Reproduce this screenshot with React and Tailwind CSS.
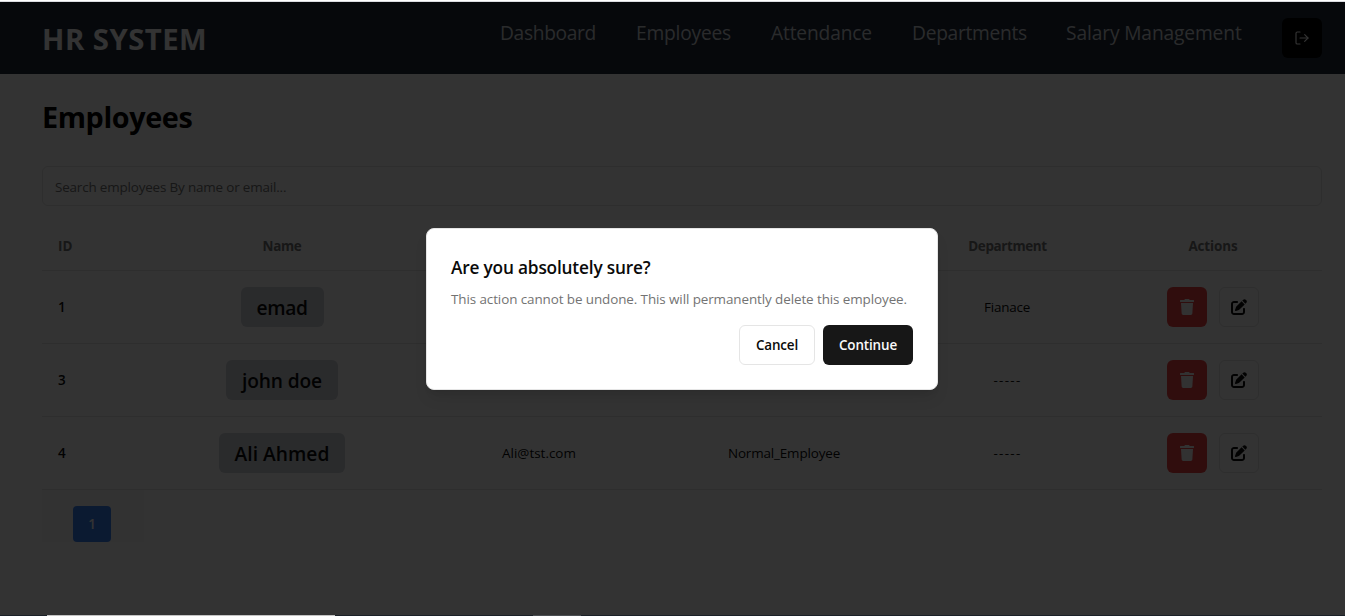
import { FaTrash } from "react-icons/fa";
import { FaPenToSquare } from "react-icons/fa6";
import { LogOut } from "lucide-react";

const navItems = [
  { label: "Dashboard", width: "w-24", track: "tracking-[-0.34px]" },
  { label: "Employees", width: "w-[95px]", track: "tracking-[-0.2px]" },
  { label: "Attendance", width: "w-[101px]", track: "tracking-[-0.15px]" },
  { label: "Departments", width: "w-[114px]", track: "tracking-[-0.28px]" },
  { label: "Salary Management", width: "w-44", track: "tracking-[-0.13px]" },
];

const employees = [
  { id: 1, name: "emad", track: "tracking-[-0.36px]", email: "", role: "", department: "Fianace" },
  { id: 3, name: "john doe", track: "tracking-[-0.14px]", email: "", role: "", department: "-----" },
  { id: 4, name: "Ali Ahmed", track: "tracking-[0.03px]", email: "Ali@tst.com", role: "Normal_Employee", department: "-----" },
];

function Header() {
  return (
    <header className="flex h-[72px] shrink-0 justify-between bg-[#1f2937] pt-4 pr-[23px] pb-4 pl-[42px]">
      <div className="text-[29.3px] leading-[42px] font-bold tracking-[0.47px] text-white">HR SYSTEM</div>
      <div className="flex items-start gap-10">
        <nav className="flex gap-10">
          {navItems.map((item) => (
            <a key={item.label} className={`whitespace-nowrap text-[19.2px] leading-[29px] text-gray-300 ${item.width} ${item.track}`}>
              {item.label}
            </a>
          ))}
        </nav>
        <button className="flex size-10 items-center justify-center rounded-md bg-black text-white">
          <LogOut className="size-4" strokeWidth={1.75} />
        </button>
      </div>
    </header>
  );
}

function EmployeeTable() {
  return (
    <table className="w-full table-fixed border-collapse text-[13.44px]">
      <colgroup>
        <col className="w-[102px]" />
        <col className="w-[276px]" />
        <col className="w-[238px]" />
        <col className="w-[252px]" />
        <col className="w-[194px]" />
        <col className="w-[218px]" />
      </colgroup>
      <thead>
        <tr className="h-[49px] border-b border-neutral-200 font-semibold text-neutral-500">
          <th className="px-4 pt-0.5 text-left">ID</th>
          <th className="pt-0.5 tracking-[-0.35px]">Name</th>
          <th></th>
          <th></th>
          <th className="pt-0.5 pl-px tracking-[-0.38px]">Department</th>
          <th className="pt-0.5 tracking-[-0.1px]">Actions</th>
        </tr>
      </thead>
      <tbody>
        {employees.map((e) => (
          <tr key={e.id} className="h-[73px] border-b border-neutral-200 text-center text-neutral-950">
            <td className="px-4 pt-0.5 text-left font-semibold">{e.id}</td>
            <td>
              <span className={`inline-flex h-10 items-center rounded-md bg-gray-300 px-4 pt-[3px] align-middle text-[19.2px] font-semibold ${e.track}`}>
                {e.name}
              </span>
            </td>
            <td className="pt-0.5">{e.email}</td>
            <td className="pt-0.5 tracking-[-0.15px]">{e.role}</td>
            <td className={e.department === "-----" ? "pt-0.5 pl-px tracking-[1.27px]" : "pt-0.5 tracking-[-0.2px]"}>{e.department}</td>
            <td>
              <div className="flex justify-center gap-3">
                <button className="flex size-10 items-center justify-center rounded-md bg-[#ef4444] text-neutral-50">
                  <FaTrash className="size-4" />
                </button>
                <button className="flex size-10 items-center justify-center rounded-md border border-neutral-200 bg-white">
                  <FaPenToSquare className="size-4" />
                </button>
              </div>
            </td>
          </tr>
        ))}
      </tbody>
      <tfoot>
        <tr>
          <td className="h-[52px] bg-neutral-100/50 p-0">
            <div className="flex h-[52px] items-start justify-center pt-4 pr-0.5">
              <button className="h-9 w-[38px] shrink-0 rounded bg-[#3b82f6] pt-px text-[13.44px] font-semibold text-white">1</button>
            </div>
          </td>
        </tr>
      </tfoot>
    </table>
  );
}

function ConfirmDialog() {
  return (
    <div className="absolute top-[228px] left-[426px] flex h-[162px] w-[512px] flex-col rounded-lg border border-neutral-200 bg-white p-6 text-neutral-950 shadow-lg">
      <h2 className="text-[17.28px] leading-[30px] font-semibold tracking-[-0.19px]">Are you absolutely sure?</h2>
      <p className="mt-1.5 text-[13.44px] leading-5 tracking-[-0.095px] whitespace-nowrap text-neutral-500">
        This action cannot be undone. This will permanently delete this employee.
      </p>
      <div className="mt-auto flex justify-end gap-2 text-[13.44px] font-semibold">
        <button className="h-10 w-[76px] rounded-md border border-neutral-200 bg-white tracking-[-0.17px]">Cancel</button>
        <button className="h-10 w-[90px] rounded-md bg-neutral-900 tracking-[-0.14px] text-neutral-50">Continue</button>
      </div>
    </div>
  );
}

export default function App() {
  return (
    <div className="relative flex h-[616px] w-[1345px] flex-col overflow-hidden bg-[#e8eaed] font-['Open_Sans',sans-serif]">
      <div className="h-0.5 shrink-0 border-b border-[#dadce0] bg-white" />
      <div className="relative flex h-[613px] shrink-0 flex-col bg-white">
        <Header />
        <main className="flex flex-col pr-[23px] pl-[42px]">
          <h1 className="mt-[23px] text-[28.8px] leading-10 font-bold tracking-[-0.4px] text-black">Employees</h1>
          <input
            className="mt-[29px] mb-[15px] h-10 rounded-md border border-neutral-200 px-3 pt-0.5 text-[13.44px] tracking-[-0.17px] placeholder:text-neutral-500"
            placeholder="Search employees By name or email..."
          />
          <EmployeeTable />
        </main>
        <div className="absolute inset-0 bg-black/80" />
      </div>
      <div className="flex h-px shrink-0 bg-[#1b2128]">
        <div className="ml-[47px] w-72 bg-[#c4c4c4]" />
        <div className="ml-[198px] w-12 bg-[#4a4e52]" />
      </div>
      <ConfirmDialog />
    </div>
  );
}
